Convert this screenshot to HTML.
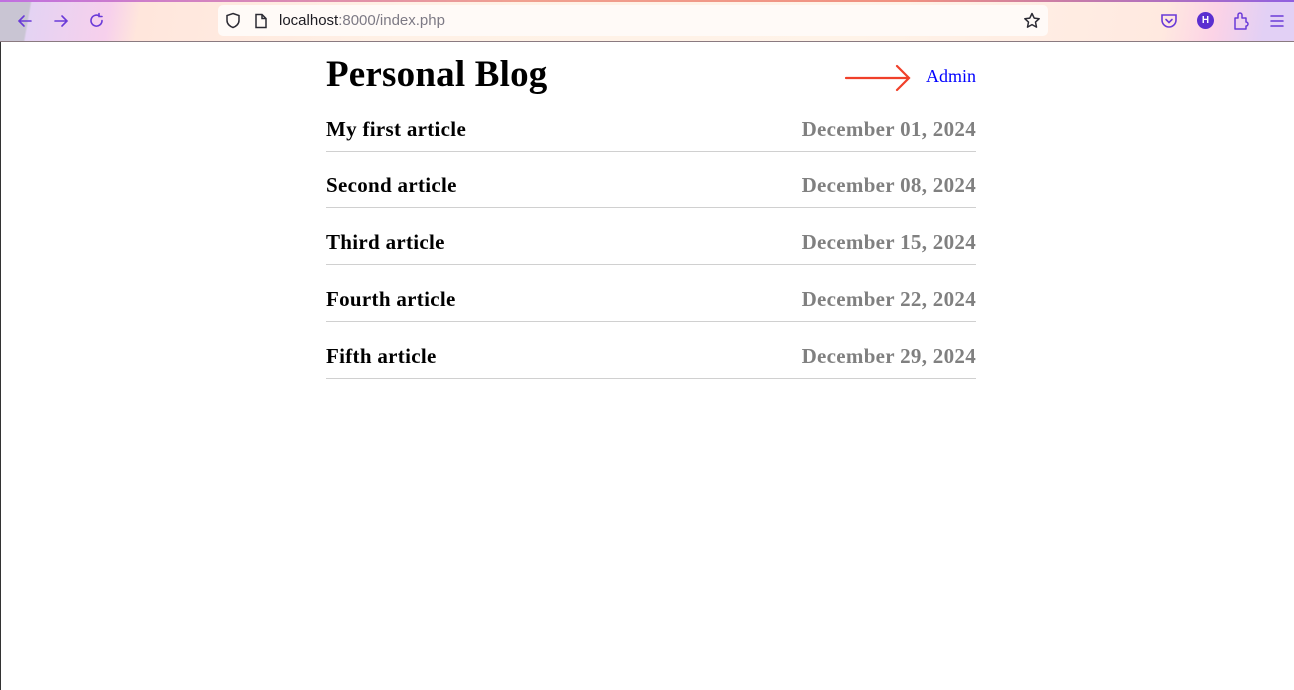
<!DOCTYPE html>
<html><head><meta charset="utf-8"><style>
html,body{margin:0;padding:0;width:1294px;height:690px;overflow:hidden;background:#fff;}
.chrome{position:absolute;left:0;top:0;width:1294px;height:41px;border-bottom:1px solid #8a7a80;
background:linear-gradient(100deg,#c9c5d3 0px,#c9c5d3 30px,#e4d3f3 32px,#f7d0ec 110px,#ffe6dc 140px,#fff1e6 400px,#fff3e8 850px,#ffe9e0 1150px,#fcd3e6 1200px,#e2d0f5 1250px);}
.chrome:before{content:"";position:absolute;left:0;right:0;top:0;height:2px;background:linear-gradient(90deg,#c070e0,#f0a090 40%,#f09080 70%,#9060e0);}
.url{position:absolute;left:218px;top:5px;width:830px;height:31px;background:#fffaf7;border-radius:5px;}
.url span{position:absolute;left:61px;top:7px;font:15px "Liberation Sans",sans-serif;color:#1c1b22;}
.url span i{font-style:normal;color:#7d7a85;}
.page{position:absolute;left:0;top:42px;width:1293px;height:648px;border-left:1px solid #333;}
h1{position:absolute;left:326px;top:53px;margin:0;font:bold 37px "Liberation Serif",serif;letter-spacing:0.2px;color:#000;}
.admin{position:absolute;right:318px;top:66px;font:18px "Liberation Serif",serif;color:#00f;}
.row{position:absolute;left:326px;width:650px;height:56px;border-bottom:1px solid #d0d0d0;font:bold 21px "Liberation Serif",serif;letter-spacing:0.3px;}
.row .t{position:absolute;left:0;bottom:9px;color:#000;}
.row .d{position:absolute;right:0;bottom:9px;color:#808080;}
svg{position:absolute;}
</style></head><body>
<div class="chrome">
<svg style="left:16px;top:12px" width="18" height="18" viewBox="0 0 18 18" fill="none" stroke="#6a3ad8" stroke-width="1.6" stroke-linecap="round"><path d="M15 9H3M8 4L3 9l5 5"/></svg>
<svg style="left:52px;top:12px" width="18" height="18" viewBox="0 0 18 18" fill="none" stroke="#6a3ad8" stroke-width="1.6" stroke-linecap="round"><path d="M3 9h12M10 4l5 5-5 5"/></svg>
<svg style="left:88px;top:12px" width="18" height="18" viewBox="0 0 18 18" fill="none" stroke="#6a3ad8" stroke-width="1.6" stroke-linecap="round"><path d="M14 8.5A5.5 5.5 0 1 1 11.5 4M11 1.5v3h3"/></svg>
<div class="url">
<svg style="left:7px;top:7px" width="16" height="17" viewBox="0 0 16 17" fill="none" stroke="#2b2a33" stroke-width="1.5"><path d="M8 1.5l6 2v5c0 3.5-3 6-6 7-3-1-6-3.5-6-7v-5z"/></svg>
<svg style="left:36px;top:8px" width="14" height="16" viewBox="0 0 14 16" fill="none" stroke="#2b2a33" stroke-width="1.5"><path d="M2 1.5h6l4 4v9H2z M8 1.5v4h4"/></svg>
<span>localhost<i>:8000/index.php</i></span>
<svg style="left:805px;top:7px" width="18" height="18" viewBox="0 0 18 18" fill="none" stroke="#2b2a33" stroke-width="1.5" stroke-linejoin="round"><path d="M9 1.5l2.2 4.6 5 .6-3.7 3.4 1 5-4.5-2.5-4.5 2.5 1-5L1.8 6.7l5-.6z"/></svg>
</div>
<svg style="left:1160px;top:12px" width="18" height="18" viewBox="0 0 18 18" fill="none" stroke="#6a3ad8" stroke-width="1.6" stroke-linecap="round"><path d="M2 3h14v5a7 7 0 0 1-14 0z M6 7.5l3 3 3-3"/></svg>
<div style="position:absolute;left:1197px;top:12px;width:17px;height:17px;border-radius:50%;background:#5b2fd0;color:#fff;font:bold 10px 'Liberation Sans',sans-serif;text-align:center;line-height:17px">H</div>
<svg style="left:1233px;top:11px" width="18" height="19" viewBox="0 0 18 19" fill="none" stroke="#6a3ad8" stroke-width="1.5" stroke-linejoin="round"><path d="M2 7h3V4a2 2 0 0 1 4 0v3h4v4a2 2 0 0 1 0 4v3H2z"/></svg>
<svg style="left:1269px;top:13px" width="16" height="16" viewBox="0 0 16 16" stroke="#6a3ad8" stroke-width="1.5" stroke-linecap="round"><path d="M2 3h12M2 8h12M2 13h12"/></svg>
</div>
<div class="page"></div>
<h1>Personal Blog</h1>
<svg style="left:844px;top:63px" width="68" height="30" viewBox="0 0 68 30" fill="none" stroke="#f0402a" stroke-width="2.2" stroke-linecap="round"><path d="M2 15h63M53 3l12 12-12 12"/></svg>
<div class="admin">Admin</div>
<div class="row" style="top:95px"><span class="t">My first article</span><span class="d">December 01, 2024</span></div>
<div class="row" style="top:151px"><span class="t">Second article</span><span class="d">December 08, 2024</span></div>
<div class="row" style="top:208px"><span class="t">Third article</span><span class="d">December 15, 2024</span></div>
<div class="row" style="top:265px"><span class="t">Fourth article</span><span class="d">December 22, 2024</span></div>
<div class="row" style="top:322px"><span class="t">Fifth article</span><span class="d">December 29, 2024</span></div>
</body></html>
